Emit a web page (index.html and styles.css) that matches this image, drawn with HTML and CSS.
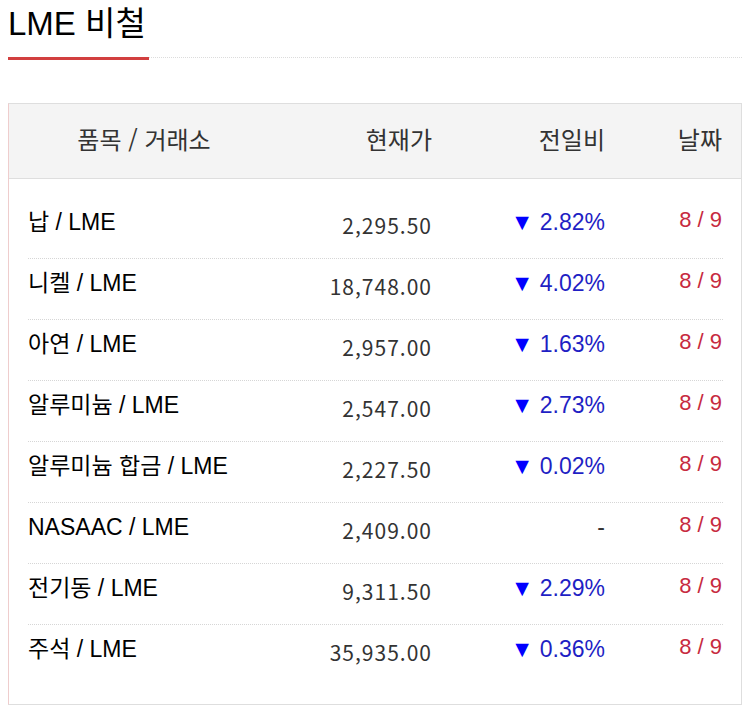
FILE: index.html
```html
<!DOCTYPE html>
<html lang="ko">
<head>
<meta charset="utf-8">
<title>LME 비철</title>
<link rel="stylesheet" href="styles.css">
</head>
<body>
<div class="wrap">
  <div class="head">
    <h1 class="title">LME 비철</h1>
    <div class="rule"></div>
  </div>
  <div class="box">
    <div class="thead grid">
      <div class="c-name">품목 / 거래소</div>
      <div class="c-price">현재가</div>
      <div class="c-chg">전일비</div>
      <div class="c-date">날짜</div>
    </div>
    <div class="tbody">
      <div class="row grid">
        <div class="c-name">납 / LME</div>
        <div class="c-price">2,295.50</div>
        <div class="c-chg"><span class="tri">▼</span> 2.82%</div>
        <div class="c-date">8 / 9</div>
      </div>
      <div class="row grid">
        <div class="c-name">니켈 / LME</div>
        <div class="c-price">18,748.00</div>
        <div class="c-chg"><span class="tri">▼</span> 4.02%</div>
        <div class="c-date">8 / 9</div>
      </div>
      <div class="row grid">
        <div class="c-name">아연 / LME</div>
        <div class="c-price">2,957.00</div>
        <div class="c-chg"><span class="tri">▼</span> 1.63%</div>
        <div class="c-date">8 / 9</div>
      </div>
      <div class="row grid">
        <div class="c-name">알루미늄 / LME</div>
        <div class="c-price">2,547.00</div>
        <div class="c-chg"><span class="tri">▼</span> 2.73%</div>
        <div class="c-date">8 / 9</div>
      </div>
      <div class="row grid">
        <div class="c-name">알루미늄 합금 / LME</div>
        <div class="c-price">2,227.50</div>
        <div class="c-chg"><span class="tri">▼</span> 0.02%</div>
        <div class="c-date">8 / 9</div>
      </div>
      <div class="row grid">
        <div class="c-name">NASAAC / LME</div>
        <div class="c-price">2,409.00</div>
        <div class="c-chg flat">-</div>
        <div class="c-date">8 / 9</div>
      </div>
      <div class="row grid">
        <div class="c-name">전기동 / LME</div>
        <div class="c-price">9,311.50</div>
        <div class="c-chg"><span class="tri">▼</span> 2.29%</div>
        <div class="c-date">8 / 9</div>
      </div>
      <div class="row grid">
        <div class="c-name">주석 / LME</div>
        <div class="c-price">35,935.00</div>
        <div class="c-chg"><span class="tri">▼</span> 0.36%</div>
        <div class="c-date">8 / 9</div>
      </div>
    </div>
  </div>
</div>
</body>
</html>
```

FILE: styles.css
```css
* { box-sizing: border-box; }
html, body { margin: 0; padding: 0; background: #fff; }
body {
  font-family: "Liberation Sans", "Noto Sans CJK KR", sans-serif;
  color: #000;
}
.wrap { padding: 0 8px; }

.head {
  display: flex;
  align-items: flex-end;
}
.title {
  margin: 0;
  padding: 4px 0 13px;
  width: 141px;
  font-size: 33px;
  line-height: 40px;
  font-weight: 400;
  border-bottom: 3px solid #d23f3f;
  white-space: nowrap;
}
.rule {
  flex: 1;
  border-bottom: 1px dotted #dcdcdc;
  margin-bottom: 2px;
}

.box {
  margin-top: 43px;
  border: 1px solid #dedede;
  border-left-color: #efcdcd;
}
.grid {
  display: grid;
  grid-template-columns: 232px 172px 173px 117px;
}
.thead {
  height: 75px;
  background: #f4f4f4;
  border-bottom: 1px solid #dedede;
  padding: 0 18px 4px 19px;
  align-items: center;
  font-family: "Noto Sans CJK KR", sans-serif;
  font-size: 24px;
  line-height: 28px;
  color: #333;
}
.thead .c-name { text-align: center; }
.thead .c-price, .thead .c-chg, .thead .c-date { text-align: right; }

.tbody { padding: 19px 18px 19px 19px; }
.row {
  height: 61px;
  border-bottom: 1px dotted #d6d6d6;
  align-items: start;
  line-height: 24px;
}
.row:last-child { border-bottom: 0; height: 60px; }
.row > div { padding-top: 12px; white-space: nowrap; }
.row .c-name { font-size: 23px; color: #000; }
.row .c-price {
  text-align: right;
  font-family: "Noto Sans CJK KR", sans-serif;
  font-size: 21px;
  color: #333;
  padding-top: 15px;
  letter-spacing: 1px;
  margin-right: 0;
}
.row .c-chg {
  text-align: right;
  font-size: 23px;
  color: #1f1fc4;
}
.row .c-chg.flat { color: #333; }
.tri { color: #0000ff; font-size: 23px; }
.row .c-date {
  text-align: right;
  font-size: 22px;
  color: #c72a40;
  padding-top: 10px;
}
```
